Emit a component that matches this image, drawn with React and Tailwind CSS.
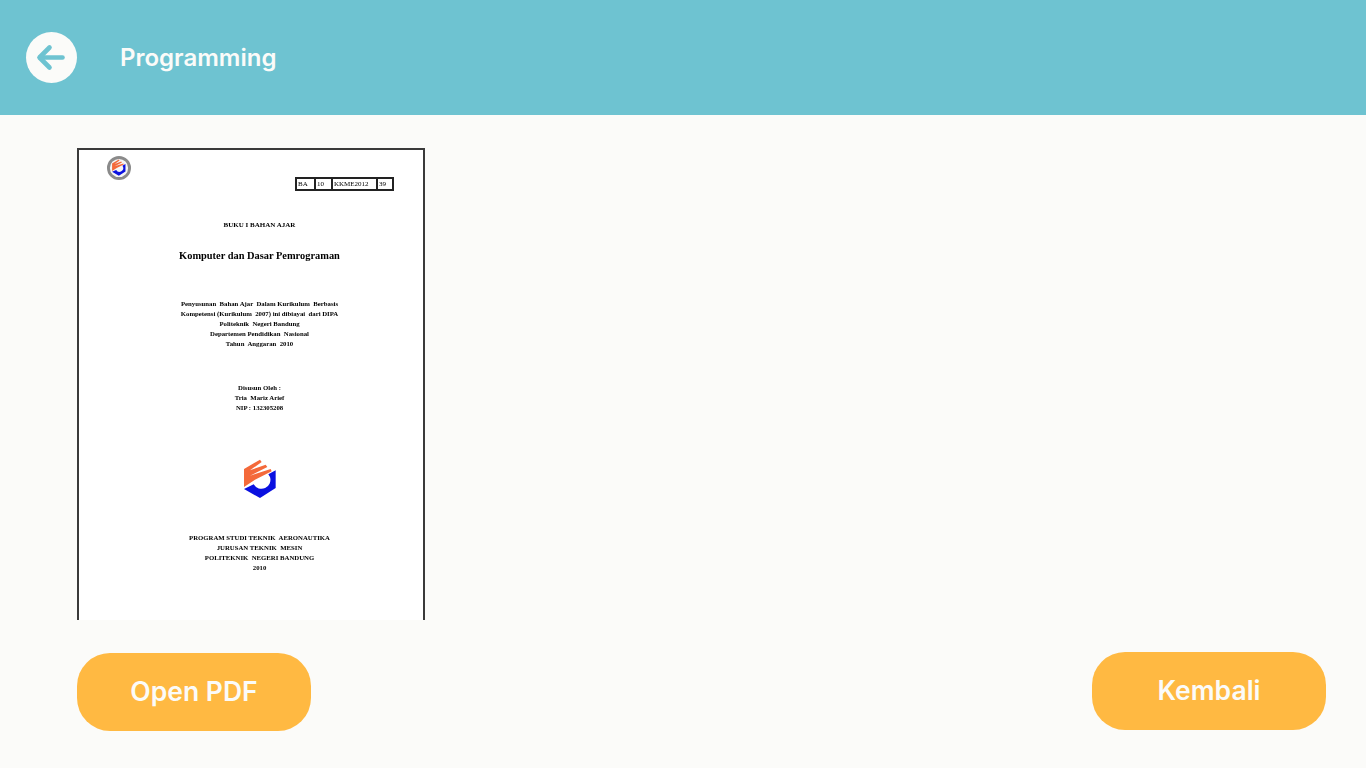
import React from "react";

const sans = "font-['Inter','Noto_Sans',sans-serif]";

function BackIcon() {
    return (
        <svg width="51" height="51" viewBox="0 0 51 51" fill="none" stroke="#6ec3d1" strokeWidth="4.6" strokeLinecap="round" strokeLinejoin="round">
            <path d="M14 25.5H36.5" />
            <path d="M23.5 15.5L13.5 25.5L23.5 35.5" />
        </svg>
    );
}

function LogoMark() {
    return (
        <>
            <path d="M122 52V105L75 135L27 108L56 94A27 27 0 0 0 105 72L100 64Z" fill="#0a10e0" />
            <path d="M27 48L75 20L80 27L45 52L92 35L97 42L45 68L107 48L110 55L60 80L27 102Z" fill="#f4693a" />
        </>
    );
}

function SmallLogo() {
    return (
        <svg width="24" height="24" viewBox="0 0 150 150" className="block">
            <circle cx="75" cy="75" r="66" fill="#f4f4f4" stroke="#8a8a8a" strokeWidth="18" />
            <g transform="translate(8 4) scale(0.88)">
                <LogoMark />
            </g>
        </svg>
    );
}

function BigLogo() {
    return (
        <svg width="50" height="50" viewBox="0 0 150 150" className="block">
            <LogoMark />
        </svg>
    );
}

function DocLine({ children, className = "" }) {
    return <p className={`h-[10px] leading-[10px] whitespace-pre text-[6.75px] font-bold text-black ${className}`}>{children}</p>;
}

function PdfCover() {
    const cells = [
        ["BA", "w-[17px]"],
        ["10", "w-[17px]"],
        ["KKME2012", "w-[45px]"],
        ["39", "w-[16px]"],
    ];

    return (
        <div className="w-[348px] h-[472px] overflow-hidden bg-white border-x-2 border-t-2 border-[#3a3a3a] font-['Liberation_Serif',serif] blur-[0.4px]">
            <div className="pl-[28px] pt-[6px]">
                <SmallLogo />
            </div>

            {/* Kode dokumen */}
            <div className="ml-[216px] -mt-[3px] flex w-[99px] h-[14px] border-2 border-[#222222]">
                {cells.map(([text, width], i) => (
                    <div key={text} className={`${width} ${i > 0 ? "border-l-2 border-[#222222] pl-px" : "pl-px"} text-[7px] leading-[10px] text-black`}>
                        {text}
                    </div>
                ))}
            </div>

            <div className="pl-[17px] flex flex-col items-center text-center">
                <DocLine className="mt-[29px] text-[7px]">BUKU I BAHAN AJAR</DocLine>
                <p className="mt-[20px] h-[12px] leading-[12px] text-[10.4px] font-bold text-black">Komputer dan Dasar Pemrograman</p>

                <DocLine className="mt-[37px]">Penyusunan  Bahan Ajar  Dalam Kurikulum  Berbasis</DocLine>
                <DocLine>Kompetensi (Kurikulum  2007) ini dibiayai  dari DIPA</DocLine>
                <DocLine>Politeknik  Negeri Bandung</DocLine>
                <DocLine>Departemen Pendidikan  Nasional</DocLine>
                <DocLine>Tahun  Anggaran  2010</DocLine>

                <DocLine className="mt-[34px]">Disusun Oleh :</DocLine>
                <DocLine>Tria  Mariz Arief</DocLine>
                <DocLine>NIP : 132305208</DocLine>

                <div className="mt-[40px]">
                    <BigLogo />
                </div>

                <DocLine className="mt-[30px]">PROGRAM STUDI TEKNIK  AERONAUTIKA</DocLine>
                <DocLine>JURUSAN TEKNIK  MESIN</DocLine>
                <DocLine>POLITEKNIK  NEGERI BANDUNG</DocLine>
                <DocLine>2010</DocLine>
            </div>
        </div>
    );
}

export default function App() {
    return (
        <div className={`h-[768px] overflow-hidden bg-[#fbfbf9] ${sans}`}>
            <header className="h-[115px] bg-[#6ec3d1] flex items-center pl-[26px]">
                <button className="w-[51px] h-[51px] rounded-full bg-[#fbfbf9] flex items-center justify-center">
                    <BackIcon />
                </button>
                <h1 className="ml-[43px] text-[24px] font-semibold text-[#fbfbf9]">Programming</h1>
            </header>

            <main className="pl-[77px] pr-[40px] pt-[33px]">
                <PdfCover />

                <div className="mt-[32px] flex items-start justify-between">
                    <button className="mt-px w-[234px] h-[78px] rounded-[33px] bg-[#ffb942] text-[26.5px] font-semibold text-[#fbfbf9]">
                        Open PDF
                    </button>
                    <button className="w-[234px] h-[78px] rounded-[33px] bg-[#ffb942] text-[26.5px] font-semibold text-[#fbfbf9]">
                        Kembali
                    </button>
                </div>
            </main>
        </div>
    );
}
